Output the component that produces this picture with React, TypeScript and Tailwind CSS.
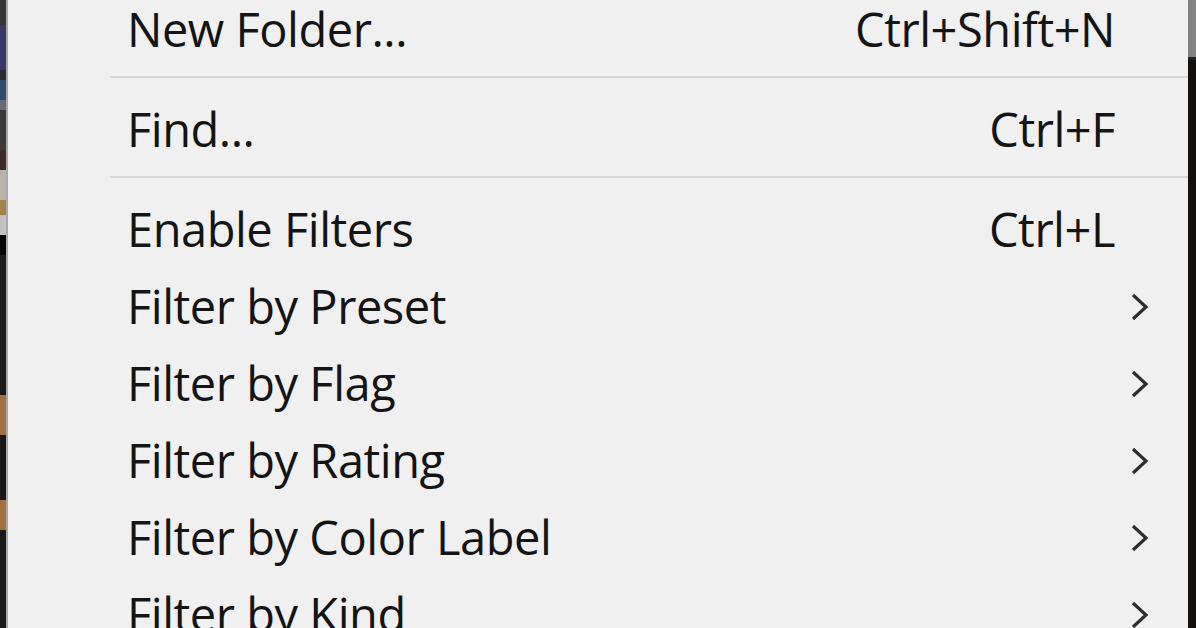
import React from "react";

const font = { fontFamily: '"Open Sans", "Noto Sans", sans-serif' };

function Chevron() {
  return (
    <svg width="18" height="28" viewBox="0 0 18 28" fill="none">
      <polyline points="2,2 15,14 2,26" stroke="#2e2e2e" strokeWidth="3.2" strokeLinejoin="miter" />
    </svg>
  );
}

type Item = { label: string; shortcut?: string; sub?: boolean } | { sep: true };

const items: Item[] = [
  { label: "New Folder...", shortcut: "Ctrl+Shift+N" },
  { sep: true },
  { label: "Find...", shortcut: "Ctrl+F" },
  { sep: true },
  { label: "Enable Filters", shortcut: "Ctrl+L" },
  { label: "Filter by Preset", sub: true },
  { label: "Filter by Flag", sub: true },
  { label: "Filter by Rating", sub: true },
  { label: "Filter by Color Label", sub: true },
  { label: "Filter by Kind", sub: true },
];

function LeftStrip() {
  const segs: [string, string][] = [
    ["h-[25px]", "bg-[#353535]"],
    ["h-[45px]", "bg-[#3b3766]"],
    ["h-[10px]", "bg-[#2a2a30]"],
    ["h-[20px]", "bg-[#2e4a6c]"],
    ["h-[10px]", "bg-[#6a6a70]"],
    ["h-[40px]", "bg-[#3a3a3a]"],
    ["h-[20px]", "bg-[#3b2b2b]"],
    ["h-[30px]", "bg-[#b9b2aa]"],
    ["h-[15px]", "bg-[#a28250]"],
    ["h-[20px]", "bg-[#c2c2c2]"],
    ["h-[20px]", "bg-[#050505]"],
    ["h-[140px]", "bg-[#1a1a1a]"],
    ["h-[40px]", "bg-[#a07040]"],
    ["h-[65px]", "bg-[#181818]"],
    ["h-[30px]", "bg-[#a0703e]"],
    ["h-[98px]", "bg-[#191919]"],
  ];
  return (
    <div className="flex h-full shrink-0">
      <div className="flex flex-col w-[6px] h-full">
        {segs.map(([h, c], i) => (
          <div key={i} className={`${h} ${c} shrink-0`} />
        ))}
      </div>
      <div className="w-[2px] h-full bg-[#a8a8a8]" />
    </div>
  );
}

function RightStrip() {
  return (
    <div className="flex flex-col w-[8px] h-full shrink-0">
      <div className="h-[57px] bg-[#838383] shrink-0" />
      <div className="h-[3px] bg-[#222] shrink-0" />
      <div className="flex-1 bg-[#121110]" />
    </div>
  );
}

export default function App() {
  return (
    <div className="w-[1196px] h-[628px] flex overflow-hidden bg-[#f0f0f0]" style={font}>
      <LeftStrip />
      <div className="flex-1 h-full overflow-hidden">
        <div className="flex flex-col -mt-[12px]">
          {items.map((it, i) =>
            "sep" in it ? (
              <div key={i} className="h-[23px] flex items-center ml-[102px]">
                <div className="h-[2px] w-full bg-[#d6d6d6]" />
              </div>
            ) : (
              <div
                key={i}
                className="h-[77px] flex items-center pt-[6px] pl-[119px] text-[47px] leading-none text-[#141414] tracking-[-0.01em]"
              >
                <span className="flex-1 whitespace-nowrap">{it.label}</span>
                {it.shortcut && <span className="whitespace-nowrap">{it.shortcut}</span>}
                <span className="w-[73px] shrink-0 flex items-center pl-[16px]">
                  {it.sub && <Chevron />}
                </span>
              </div>
            )
          )}
        </div>
      </div>
      <RightStrip />
    </div>
  );
}
